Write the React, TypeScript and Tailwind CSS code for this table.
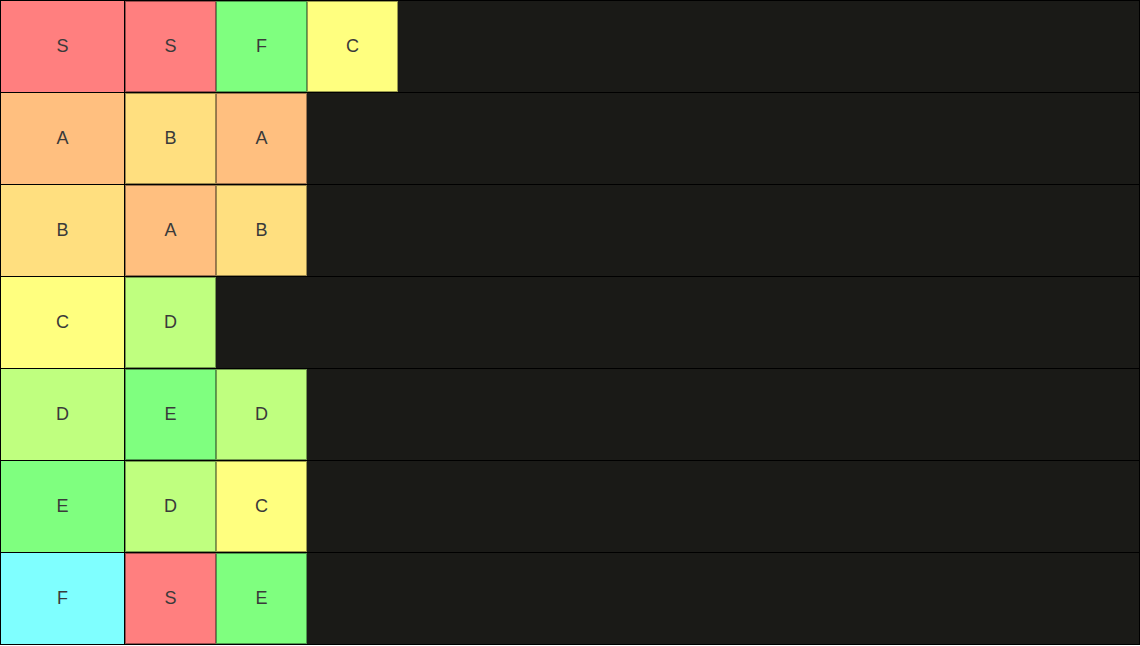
const colors: Record<string, string> = {
  S: 'bg-[#ff7f7f]',
  A: 'bg-[#ffbf7f]',
  B: 'bg-[#ffdf7f]',
  C: 'bg-[#ffff7f]',
  D: 'bg-[#bfff7f]',
  E: 'bg-[#7fff7f]',
  F: 'bg-[#7fffff]',
}

// items carry their own colour: the F card in the top row is green
const rows: { label: string; items: { text: string; color: string }[] }[] = [
  { label: 'S', items: [{ text: 'S', color: 'S' }, { text: 'F', color: 'E' }, { text: 'C', color: 'C' }] },
  { label: 'A', items: [{ text: 'B', color: 'B' }, { text: 'A', color: 'A' }] },
  { label: 'B', items: [{ text: 'A', color: 'A' }, { text: 'B', color: 'B' }] },
  { label: 'C', items: [{ text: 'D', color: 'D' }] },
  { label: 'D', items: [{ text: 'E', color: 'E' }, { text: 'D', color: 'D' }] },
  { label: 'E', items: [{ text: 'D', color: 'D' }, { text: 'C', color: 'C' }] },
  { label: 'F', items: [{ text: 'S', color: 'S' }, { text: 'E', color: 'E' }] },
]

export default function App() {
  return (
    <div
      className="w-[1140px] bg-[#1a1a17] border-t border-x border-black text-[18px] text-[#3a3a3a]"
      style={{ fontFamily: '"Liberation Sans", Arial, sans-serif' }}
    >
      {rows.map((row) => (
        <div key={row.label} className="flex h-[92px] border-b border-black">
          <div
            className={`w-[124px] shrink-0 flex items-center justify-center border-r border-black ${colors[row.label]}`}
          >
            {row.label}
          </div>
          <div className="flex">
            {row.items.map((item, i) => (
              <div
                key={i}
                className={`w-[91px] h-[91px] flex items-center justify-center border border-black/40 ${colors[item.color]}`}
              >
                {item.text}
              </div>
            ))}
          </div>
        </div>
      ))}
    </div>
  )
}
